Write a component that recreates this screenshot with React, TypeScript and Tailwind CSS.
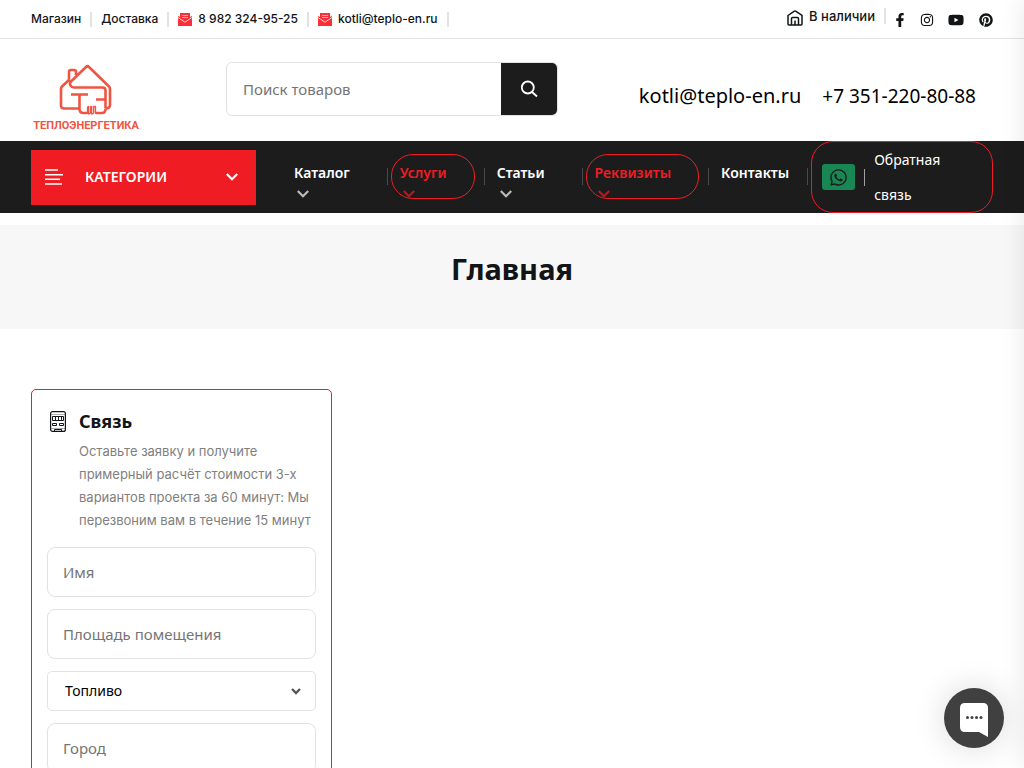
import React from "react";
import { FaFacebookF, FaInstagram, FaYoutube, FaPinterest, FaWhatsapp } from "react-icons/fa";

function MailIcon() {
  return (
    <svg width="14" height="13" viewBox="0 0 14 13" aria-hidden="true">
      <path d="M2 0h10v4l2-1v10H0V3l2 1z" fill="#fd2e36" />
      <path d="M4 2.500h6M4 4.500h6" stroke="#fff" strokeWidth=".6" fill="none" />
      <path d="M0 4.500l7 4.700 7-4.700" stroke="#fff" strokeWidth=".8" fill="none" />
    </svg>
  );
}

function Chevron({ className = "" }: { className?: string }) {
  return (
    <svg width="12" height="8" viewBox="0 0 12 8" fill="none" stroke="currentColor" strokeWidth="2.2" className={className} aria-hidden="true">
      <path d="m.8 1 5.2 5.2L11.2 1" />
    </svg>
  );
}

function Logo() {
  return (
    <svg width="54" height="52" viewBox="0 0 54 52" fill="none" stroke="#f05443" strokeLinejoin="round" aria-hidden="true">
      <path
        d="M20 44.5H5q-3 0-3-3V25q0-1.500 1-2.500L10 16V8q0-2 2-2h3q2 0 2 2v3M46.500 44.500q4.500 0 4.500-4V25q0-1.500-1-2.500L30 3q-1.500-1.500-3 0L11.500 18q-1 2 0 3.500 1 2 3.500 2h28.500q3 0 3 3v18"
        strokeWidth="2.600"
      />
      <path d="M12 30.500h17M20.500 31v14q0 4 4 4H28M37 35.500h9M37 49h6q3.500 0 3.500-4" strokeWidth="2.600" />
      <path d="M28.500 50v-6q0-1.500 1.200-1.500V50q2 0 2-1.500v-6h1V50q2 0 2-1.500v-6h1.800V50" strokeWidth="1.300" />
    </svg>
  );
}

function Separator() {
  return <span className="h-[15px] w-0.5 bg-[#e2e2e2]" aria-hidden="true" />;
}

const navItems = [
  { label: "Каталог", accent: false, menu: true },
  { label: "Услуги", accent: true, menu: true },
  { label: "Статьи", accent: false, menu: true },
  { label: "Реквизиты", accent: true, menu: true },
  { label: "Контакты", accent: false, menu: false },
];

function NavItem({ label, accent, menu }: { label: string; accent: boolean; menu: boolean }) {
  return (
    <li className="flex items-center">
      <a
        href="#"
        className={`flex h-[45px] flex-col items-start rounded-[22px] border pl-2 pt-2 font-semibold ${
          menu ? "pr-[27px]" : "pr-2"
        } ${accent ? "border-[#ef1c24] text-[#ef1c24]" : "border-transparent text-white"}`}
      >
        <span className="h-5 leading-5">{label}</span>
        {menu && <Chevron className="ml-[3px] mt-[7px] opacity-70" />}
      </a>
      <span className="ml-[9px] mr-[3px] h-[17px] w-px bg-[#4a4a4a]" aria-hidden="true" />
    </li>
  );
}

const fieldClass =
  "h-[50px] w-full rounded-lg border border-[#e2e2e2] px-[15px] text-[15px] text-black placeholder:text-[#757575] outline-none";

export default function App() {
  return (
    <div className="h-screen overflow-y-auto overflow-x-hidden bg-white font-['Noto_Sans',sans-serif] text-[#121416] [scrollbar-width:none]">
      <div className="flex h-[39px] items-center justify-between border-b border-[#e2e2e2] px-[31px] font-['Inter',sans-serif] text-xs font-medium">
        <div className="flex items-center gap-[9px]">
          <a href="#">Магазин</a>
          <Separator />
          <a href="#">Доставка</a>
          <Separator />
          <a href="#" className="flex items-center gap-1.5"><MailIcon />8 982 324-95-25</a>
          <Separator />
          <a href="#" className="flex items-center gap-1.5"><MailIcon />kotli@teplo-en.ru</a>
          <Separator />
        </div>
        <div className="flex items-center pt-px">
          <a href="#" className="mb-1.5 flex items-center gap-1.5 text-[13px]">
            <svg width="16" height="16" viewBox="0 0 16 16" fill="none" stroke="currentColor" strokeWidth="1.5" className="mt-0.5" aria-hidden="true">
              <path d="M1 5.5 7 1.4q1-.7 2 0l6 4.1V14q0 1-1 1H2q-1 0-1-1zM4.500 15V8.500q0-1 1-1h5q1 0 1 1V15M8 10.500V15" />
            </svg>
            В наличии
          </a>
          <span className="mb-2 ml-[9px] h-4 w-0.5 bg-[#e2e2e2]" aria-hidden="true" />
          <a href="#" aria-label="Facebook" className="ml-[7px]"><FaFacebookF size={14} /></a>
          <a href="#" aria-label="Instagram" className="ml-[13px]"><FaInstagram size={14} /></a>
          <a href="#" aria-label="YouTube" className="ml-3.5"><FaYoutube size={16} /></a>
          <a href="#" aria-label="Pinterest" className="ml-[15px]"><FaPinterest size={14} /></a>
        </div>
      </div>

      <header className="flex h-[102px] px-[31px]">
        <a href="#" className="flex w-[110px] flex-col items-center pt-[25px] text-[#f05443]">
          <Logo />
          <span className="font-['Roboto',sans-serif] text-[11px] font-bold leading-5">ТЕПЛОЭНЕРГЕТИКА</span>
        </a>
        <form className="ml-[85px] mt-[23px] flex h-[54px] w-[332px] overflow-hidden rounded-md border border-[#e2e2e2]" onSubmit={(e) => e.preventDefault()}>
          <input aria-label="Поиск товаров" placeholder="Поиск товаров" className="min-w-0 flex-1 px-4 text-[15px] outline-none placeholder:text-[#757575]" />
          <button aria-label="Найти" className="flex w-14 items-center justify-center bg-[#1c1c1c] text-white">
            <svg width="18" height="18" viewBox="0 0 18 18" fill="none" stroke="currentColor" strokeWidth="1.8" aria-hidden="true">
              <circle cx="7.8" cy="7.5" r="6" />
              <path d="m12 12 5 4.5" />
            </svg>
          </button>
        </form>
        <div className="ml-auto mr-[17px] mt-[41px] flex gap-[21px] leading-8 text-black">
          <a href="#" className="text-xl leading-8">kotli@teplo-en.ru</a>
          <a href="#" className="text-[19px]">+7 351-220-80-88</a>
        </div>
      </header>

      <nav className="flex h-[72px] items-center bg-[#1c1c1c] px-[31px] text-sm text-white">
        <button className="flex h-[55px] w-[225px] shrink-0 items-center bg-[#ef1c24] px-3.5 font-semibold">
          <svg width="18" height="16" viewBox="0 0 18 16" stroke="#fff" strokeWidth="1.4" aria-hidden="true">
            <path d="M0 1h13M0 5.700h18M0 10.300h15M0 15h17" />
          </svg>
          <span className="ml-[22px]">КАТЕГОРИИ</span>
          <Chevron className="ml-auto mr-1" />
        </button>
        <ul className="mb-0.5 ml-[29px] flex">
          {navItems.map((item) => (
            <NavItem key={item.label} {...item} />
          ))}
        </ul>
        <a href="#" className="flex h-[72px] min-w-0 flex-1 items-center rounded-[22px] border border-[#ef1c24] pl-2.5">
          <span className="flex h-[26px] w-[33px] shrink-0 items-center justify-center rounded-[3px] bg-[#198754] text-[#1c1c1c]"><FaWhatsapp size={19} /></span>
          <span className="mx-[9px] h-[17px] w-px bg-[#a0a0a0]" aria-hidden="true" />
          <span className="w-24 leading-[35px]">Обратная связь</span>
        </a>
      </nav>

      <section className="mt-3 flex h-[104px] justify-center bg-[#f7f7f7] pt-6">
        <h1 className="text-[29px] font-bold leading-10">Главная</h1>
      </section>

      <main className="px-[31px] py-[60px]">
        <form className="w-[301px] rounded-[5px] border border-[#ef1c24] px-[15px] pb-4 pt-[19px]" onSubmit={(e) => e.preventDefault()}>
          <div className="flex">
            <svg width="16" height="21" viewBox="0 0 16 21" fill="none" stroke="#121416" className="ml-[3px] mt-0.5 shrink-0" aria-hidden="true">
              <rect x=".6" y=".6" width="14.8" height="19.8" rx="2" strokeWidth="1.2" />
              <path d="M2.500 5.500h11v4h-11zM5.500 5.500v4M8.500 5.500v4M11.500 5.500v4M2.500 12.500h4v2h-4zM9.500 12.500h4v2h-4zM4.500 20v-1.500h7V20" />
              <path d="M1 3.500h14M1 17.500h14" strokeOpacity=".35" />
            </svg>
            <div className="ml-[13px]">
              <h2 className="text-lg font-bold leading-6">Связь</h2>
              <p className="mt-[7px] w-[240px] font-['Inter',sans-serif] text-[13px] leading-[23px] text-[#808080]">
                Оставьте заявку и получите примерный расчёт стоимости 3-х вариантов проекта за 60 минут: Мы перезвоним вам в течение 15 минут
              </p>
            </div>
          </div>
          <div className="mt-[15px] flex flex-col gap-3">
            <input aria-label="Имя" placeholder="Имя" className={fieldClass} />
            <input aria-label="Площадь помещения" placeholder="Площадь помещения" className={fieldClass} />
            <div className="grid items-center">
              <select aria-label="Топливо" className="col-start-1 row-start-1 h-10 w-full appearance-none rounded-[5px] border border-[#e2e2e2] bg-white px-[17px] text-sm text-black outline-none">
                <option>Топливо</option>
              </select>
              <svg width="10" height="7" viewBox="0 0 10 7" fill="none" stroke="#555" strokeWidth="2.4" className="pointer-events-none col-start-1 row-start-1 mr-[15px] justify-self-end" aria-hidden="true">
                <path d="m1 1 4 4 4-4" />
              </svg>
            </div>
            <input aria-label="Город" placeholder="Город" className={fieldClass} />
          </div>
        </form>
      </main>

      <div className="pointer-events-none fixed -right-5 top-0 h-full w-5 shadow-[0_0_25px_rgba(0,0,0,0.1)]" aria-hidden="true" />
      <button aria-label="Открыть чат" className="fixed bottom-5 right-5 flex size-[60px] items-center justify-center rounded-full bg-[#404040] shadow-[0_0_32px_rgba(0,0,0,0.15)]">
        <svg width="28" height="34" viewBox="0 0 28 34" className="mt-1" aria-hidden="true">
          <path d="M5 0h18q5 0 5 5v29l-9-5H5q-5 0-5-5V5q0-5 5-5" fill="#fff" />
          <g fill="#404040"><circle cx="7.500" cy="14.500" r="1.500" /><circle cx="12" cy="14.500" r="1.500" /><circle cx="16.500" cy="14.500" r="1.500" /><circle cx="21" cy="14.500" r="1.500" /></g>
        </svg>
      </button>
    </div>
  );
}
